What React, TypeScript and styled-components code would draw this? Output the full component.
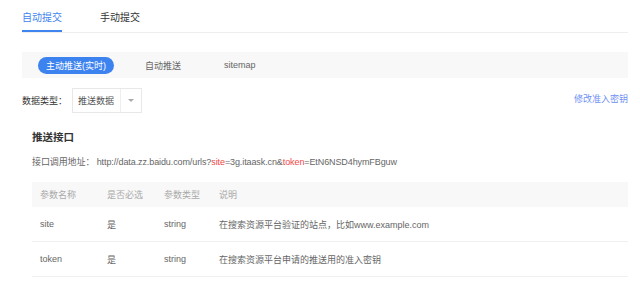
import React from "react";
import styled, { createGlobalStyle } from "styled-components";

const Global = createGlobalStyle`
  html, body { margin: 0; padding: 0; background: #fff; }
  body { font-family: "Liberation Sans", "Noto Sans CJK SC", sans-serif; color: #333; }
  * { box-sizing: border-box; }
`;

const Page = styled.div`
  width: 640px;
  height: 296px;
  padding: 0 12px 0 22px;
  overflow: hidden;
`;

const Tabs = styled.div`
  display: flex;
  gap: 38px;
  height: 33px;
  border-bottom: 1px solid #eeeeee;
`;

const Tab = styled.div<{ $active?: boolean }>`
  display: flex;
  align-items: center;
  height: 32px;
  padding-top: 2px;
  font-size: 10px;
  color: ${(p) => (p.$active ? "#3f84ef" : "#333")};
  border-bottom: 2px solid ${(p) => (p.$active ? "#3f84ef" : "transparent")};
`;

const SegBar = styled.div`
  margin-top: 19px;
  height: 26px;
  background: #f8f8f8;
  display: flex;
  align-items: center;
  padding-left: 16px;
  gap: 19px;
`;

const Seg = styled.div<{ $active?: boolean }>`
  height: 17px;
  padding: 0 ${(p) => (p.$active ? "8px" : "12px")};
  border-radius: 9px;
  display: flex;
  align-items: center;
  font-size: 9px;
  color: ${(p) => (p.$active ? "#fff" : "#666")};
  background: ${(p) => (p.$active ? "#3d83f0" : "transparent")};
`;

const FilterRow = styled.div`
  margin-top: 10px;
  display: flex;
  align-items: center;
  justify-content: space-between;
`;

const Field = styled.div`
  display: flex;
  align-items: center;
`;

const Label = styled.span`
  font-size: 9px;
  color: #333;
  width: 50px;
`;

const Select = styled.div`
  width: 70px;
  height: 25px;
  border: 1px solid #e8e8e8;
  display: flex;
  align-items: center;
  font-size: 9px;
  color: #555;
`;

const SelectValue = styled.div`
  flex: 1;
  padding-left: 5px;
  border-right: 1px solid #eeeeee;
  height: 100%;
  display: flex;
  align-items: center;
`;

const SelectArrow = styled.div`
  width: 20px;
  display: flex;
  align-items: center;
  justify-content: center;
`;

const Link = styled.a`
  font-size: 9px;
  color: #6f8ff3;
  align-self: flex-start;
  margin-top: 4px;
  text-decoration: none;
`;

const Section = styled.div`
  padding-left: 10px;
  margin-top: 17px;
`;

const Title = styled.div`
  font-size: 10.5px;
  font-weight: bold;
  color: #333;
  line-height: 14px;
`;

const UrlLine = styled.div`
  margin-top: 12px;
  font-size: 9px;
  line-height: 12px;
  color: #666;
  white-space: nowrap;
  letter-spacing: -0.1px;
`;

const Red = styled.span`
  color: #f04848;
`;

const Table = styled.div`
  margin-top: 14px;
`;

const Row = styled.div<{ $head?: boolean }>`
  display: grid;
  grid-template-columns: 67px 57px 55px 1fr;
  align-items: center;
  height: ${(p) => (p.$head ? "25px" : "35px")};
  background: ${(p) => (p.$head ? "#f8f8f8" : "transparent")};
  border-bottom: ${(p) => (p.$head ? "none" : "1px solid #f0f0f0")};
  font-size: 9px;
  color: ${(p) => (p.$head ? "#aaa" : "#666")};
`;

const Cell = styled.div`
  padding-left: 8px;
  white-space: nowrap;
`;

const rows = [
  ["site", "是", "string", "在搜索资源平台验证的站点，比如www.example.com"],
  ["token", "是", "string", "在搜索资源平台申请的推送用的准入密钥"],
];

export default function App() {
  return (
    <Page>
      <Global />
      <Tabs>
        <Tab $active>自动提交</Tab>
        <Tab>手动提交</Tab>
      </Tabs>
      <SegBar>
        <Seg $active>主动推送(实时)</Seg>
        <Seg>自动推送</Seg>
        <Seg>sitemap</Seg>
      </SegBar>
      <FilterRow>
        <Field>
          <Label>数据类型：</Label>
          <Select>
            <SelectValue>推送数据</SelectValue>
            <SelectArrow>
              <svg width="6" height="4" viewBox="0 0 6 4">
                <path d="M0 0 L6 0 L3 3 Z" fill="#aaa" />
              </svg>
            </SelectArrow>
          </Select>
        </Field>
        <Link>修改准入密钥</Link>
      </FilterRow>
      <Section>
        <Title>推送接口</Title>
        <UrlLine>
          接口调用地址： http://data.zz.baidu.com/urls?<Red>site</Red>=3g.itaask.cn&amp;
          <Red>token</Red>=EtN6NSD4hymFBguw
        </UrlLine>
        <Table>
          <Row $head>
            <Cell>参数名称</Cell>
            <Cell>是否必选</Cell>
            <Cell>参数类型</Cell>
            <Cell>说明</Cell>
          </Row>
          {rows.map((r) => (
            <Row key={r[0]}>
              {r.map((c, i) => (
                <Cell key={i}>{c}</Cell>
              ))}
            </Row>
          ))}
        </Table>
      </Section>
    </Page>
  );
}
